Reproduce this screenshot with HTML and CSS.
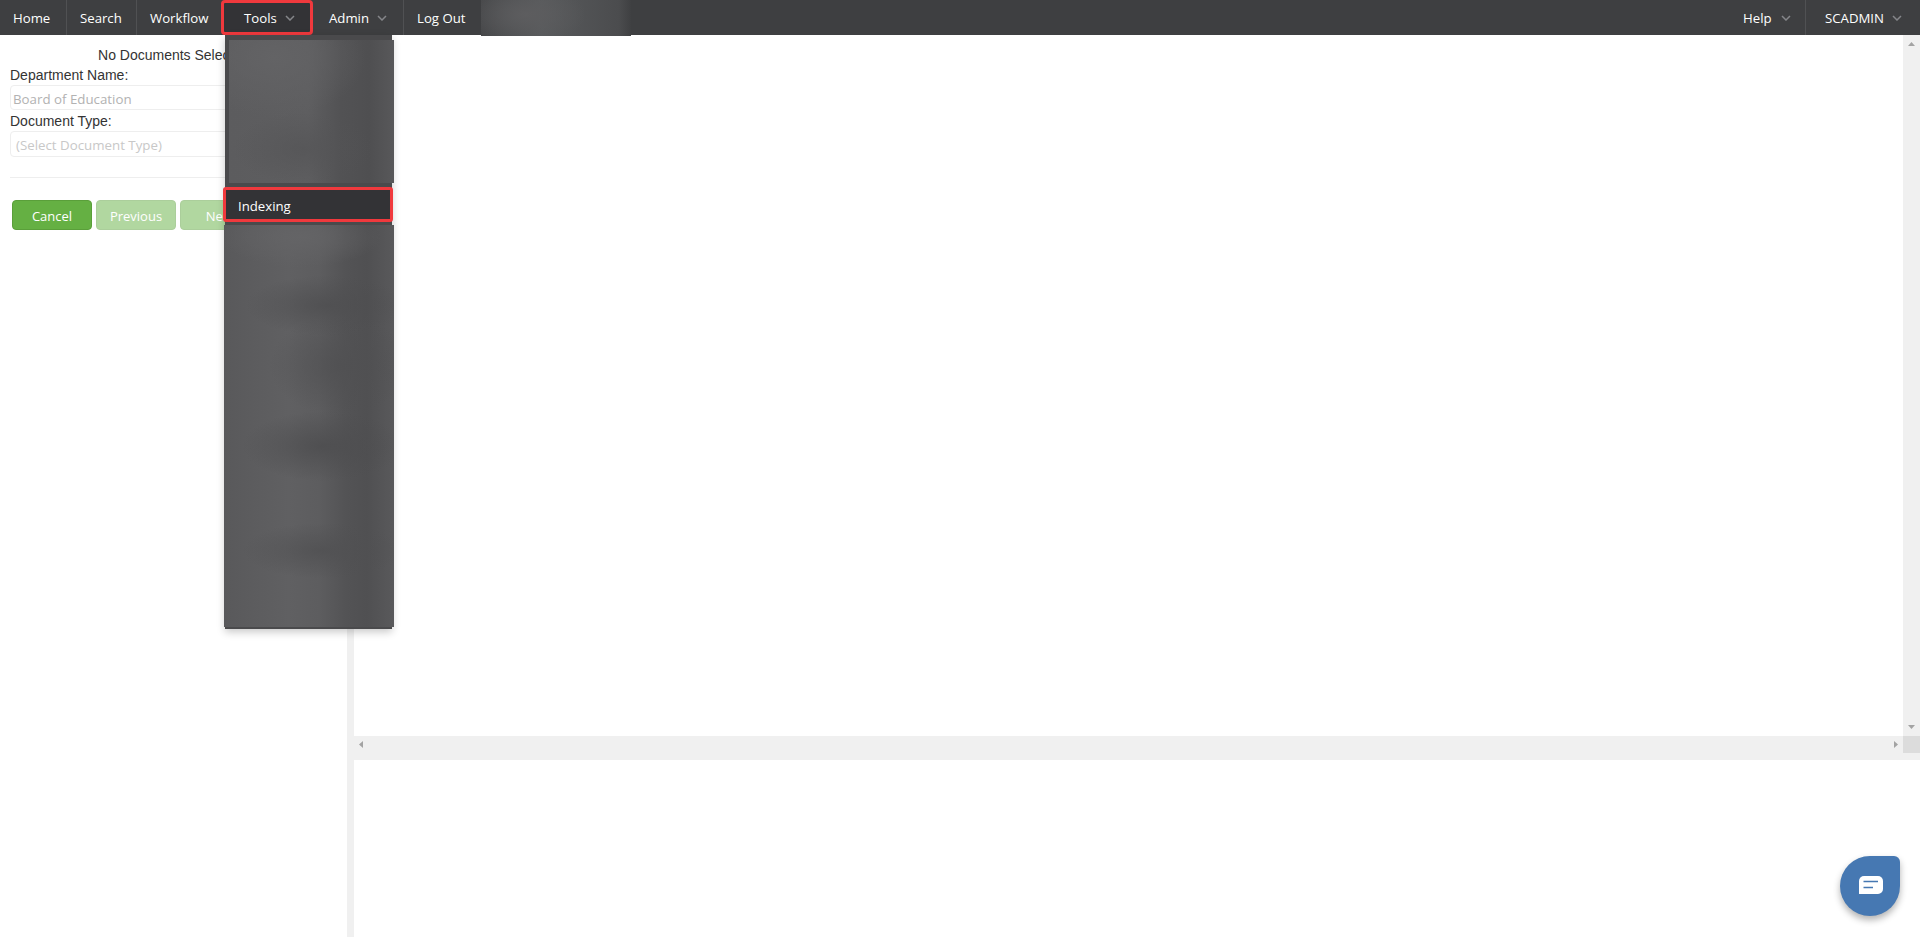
FILE: index.html
```html
<!DOCTYPE html>
<html lang="en">
<head>
<meta charset="utf-8">
<title>Indexing</title>
<link rel="stylesheet" href="styles.css">
</head>
<body>
<nav class="nav">
  <a class="nav-item home">Home</a>
  <a class="nav-item search">Search</a>
  <a class="nav-item workflow">Workflow</a>
  <a class="nav-item tools">Tools<svg class="chev" viewBox="0 0 10 6"><path d="M1 1l4 4 4-4"/></svg></a>
  <a class="nav-item admin">Admin<svg class="chev" viewBox="0 0 10 6"><path d="M1 1l4 4 4-4"/></svg></a>
  <a class="nav-item logout">Log Out</a>
  <div class="nav-blur"></div>
  <a class="nav-item help">Help<svg class="chev" viewBox="0 0 10 6"><path d="M1 1l4 4 4-4"/></svg></a>
  <a class="nav-item user">SCADMIN<svg class="chev" viewBox="0 0 10 6"><path d="M1 1l4 4 4-4"/></svg></a>
</nav>

<div class="menu">
  <div class="blur-top"></div>
  <a class="menu-item">Indexing</a>
  <div class="blur-bottom"></div>
</div>

<main class="main">
  <section class="left">
    <div class="status">No Documents Selected</div>
    <label class="label">Department Name:</label>
    <div class="field dept">Board of Education</div>
    <label class="label">Document Type:</label>
    <div class="field type">(Select Document Type)</div>
    <hr class="rule">
    <div class="buttons">
      <button class="btn">Cancel</button>
      <button class="btn off">Previous</button>
      <button class="btn off">Next</button>
    </div>
  </section>
  <div class="splitter"></div>
  <section class="right">
    <div class="viewer">
      <div class="viewer-body"></div>
      <div class="vbar">
        <svg class="arrow" viewBox="0 0 7 4"><path d="M3.5 0L7 4H0z"/></svg>
        <svg class="arrow" viewBox="0 0 7 4"><path d="M0 0h7L3.5 4z"/></svg>
      </div>
    </div>
    <div class="hbar">
      <div class="hbar-track">
        <svg class="arrow-h" viewBox="0 0 4 7"><path d="M4 0v7L0 3.5z"/></svg>
        <svg class="arrow-h" viewBox="0 0 4 7"><path d="M0 0l4 3.5L0 7z"/></svg>
      </div>
      <div class="corner"></div>
    </div>
    <div class="lower"></div>
  </section>
</main>

<button class="chat" aria-label="Chat">
  <svg viewBox="0 0 24 18" class="chat-icon"><path class="bubble" d="M0 17.500V5a5 5 0 0 1 5-5h14a5 5 0 0 1 5 5v8a5 5 0 0 1-5 5H.5a.5.500 0 0 1-.5-.5z"/><path class="chat-line" d="M4.500 5.500h14.500M4.500 11.500h9.500"/></svg>
</button>
</body>
</html>
```
FILE: styles.css
```css
* { box-sizing: border-box; }
html, body { height: 100%; }
body {
  margin: 0;
  display: flex;
  flex-direction: column;
  height: 937px;
  overflow: hidden;
  background: #fff;
  font-family: "Liberation Sans", Arial, sans-serif;
  font-size: 14px;
  color: #333;
}

/* Top navigation */
.nav {
  flex: 0 0 35px;
  height: 35px;
  min-height: 0;
  display: flex;
  align-items: flex-start;
  background: #3e3f41;
  font-family: "Open Sans", sans-serif;
  font-size: 13.2px;
  color: #fff;
}
.nav-item {
  display: flex;
  align-items: center;
  height: 35px;
  border-right: 1px solid #505153;
  white-space: nowrap;
}
.home { width: 67px; padding-left: 13px; }
.search { width: 70px; padding-left: 13px; }
.workflow { width: 84px; padding-left: 13px; border-right: 0; }
.tools {
  width: 92px;
  padding-left: 20px;
  background: #333336;
  border: 3px solid #f0393d;
  border-radius: 4px;
}
.admin { width: 91px; padding-left: 16px; }
.logout { width: 77px; padding-left: 13px; border-right: 0; }
.nav-blur {
  width: 150px;
  height: 36px;
  background:
    radial-gradient(60px 30px at 30% 40%, #5d5d5f, transparent),
    linear-gradient(90deg, #464749, #585a5c 40%, #4b4c4e 92%, #3f4042);
}
.help { margin-left: auto; width: 177px; padding-left: 114px; flex: 0 0 auto; }
.user { width: 114px; padding-left: 19px; border-right: 0; }
.chev {
  flex: 0 0 10px;
  width: 10px;
  height: 6px;
  margin-left: 8px;
  fill: none;
  stroke: #85868a;
  stroke-width: 1.5;
}
.help .chev { margin-left: 9px; }

/* Dropdown over the page */
.menu {
  position: absolute;
  z-index: 5;
  left: 225px;
  top: 35px;
  width: 167px;
  height: 594px;
  padding-top: 5px;
  background: #4a4a4c;
  box-shadow: 0 3px 8px rgba(0, 0, 0, .22);
}
.blur-top {
  width: 165px;
  height: 143px;
  margin-left: 4px;
  background:
    radial-gradient(70px 36px at 45% 76%, rgba(84, 84, 86, .7), transparent),
    radial-gradient(90px 60px at 28% 12%, #636365, transparent),
    linear-gradient(90deg, #5c5c5e, #5e5e60 48%, #525254 68%, #4f4f51 85%, #58585a);
}
.menu-item {
  display: flex;
  align-items: center;
  width: 170px;
  height: 35px;
  margin: 4px 0 3px -2px;
  padding: 2px 0 0 12px;
  background: #333336;
  border: 3px solid #f0393d;
  border-radius: 3px;
  font-family: "Open Sans", sans-serif;
  font-size: 13.2px;
  color: #fff;
}
.blur-bottom {
  width: 170px;
  height: 402px;
  margin-left: -1px;
  background:
    radial-gradient(80px 30px at 60% 20%, rgba(78, 78, 80, .8), transparent),
    radial-gradient(80px 35px at 58% 55%, rgba(77, 77, 79, .85), transparent),
    radial-gradient(80px 28px at 58% 81%, rgba(80, 80, 82, .8), transparent),
    radial-gradient(70px 50px at 68% 35%, rgba(80, 80, 82, .8), transparent),
    radial-gradient(80px 30px at 45% 3%, #646466, transparent),
    linear-gradient(90deg, #59595b, #606062 38%, #5d5d5f 56%, #535355 72%, #505052 84%, #59595b);
}

/* Page body */
.main {
  flex: 1;
  display: flex;
  min-height: 0;
}
.left {
  flex: 0 0 347px;
  padding: 10px 7px 0 10px;
}
.status { height: 20px; line-height: 20px; text-align: center; padding-right: 3px; }
.label { display: block; height: 20px; line-height: 20px; }
.field {
  height: 25px;
  margin-bottom: 1px;
  line-height: 27px;
  border: 1px solid #eeeeee;
  border-radius: 4px;
  font-family: "Open Sans", sans-serif;
  font-size: 13.3px;
  color: #b2b2b2;
}
.dept { padding-left: 2px; }
.type { padding-left: 5px; height: 26px; color: #c8c8c8; }
.rule {
  height: 1px;
  margin: 20px 0 22px;
  border: 0;
  background: #eeeeee;
}
.buttons { display: flex; gap: 4px; padding-left: 2px; }
.btn {
  width: 80px;
  height: 30px;
  padding: 2px 0 0;
  border: 1px solid #5a9f3a;
  border-radius: 4px;
  background: #65b043;
  font-family: "Open Sans", sans-serif;
  font-size: 13px;
  color: #fff;
}
.btn.off { opacity: .5; }
.splitter { flex: 0 0 7px; background: #f0f0f0; }
.right { flex: 1; display: flex; flex-direction: column; min-width: 0; }
.viewer { flex: 0 0 701px; display: flex; }
.viewer-body { flex: 1; }
.vbar {
  flex: 0 0 17px;
  display: flex;
  flex-direction: column;
  justify-content: space-between;
  align-items: center;
  padding: 7px 0;
  background: #f0f0f0;
}
.arrow { width: 7px; height: 4px; fill: #a3a3a3; }
.hbar { flex: 0 0 24px; display: flex; align-items: flex-start; background: #f0f0f0; }
.hbar-track {
  flex: 1;
  height: 17px;
  display: flex;
  justify-content: space-between;
  align-items: center;
  padding: 0 5px;
}
.arrow-h { width: 4px; height: 7px; fill: #a3a3a3; }
.corner { flex: 0 0 17px; height: 17px; background: #dcdcdc; }
.lower { flex: 1; }

/* Chat launcher */
.chat {
  position: absolute;
  z-index: 6;
  left: 1840px;
  top: 856px;
  width: 60px;
  height: 60px;
  padding: 0 0 2px 1px;
  display: flex;
  align-items: center;
  justify-content: center;
  border: 0;
  border-radius: 50% 6px 50% 50%;
  background: #4678b2;
  box-shadow: 0 4px 7px rgba(0, 0, 0, .3);
}
.chat-icon { width: 24px; height: 18px; }
.bubble { fill: #fff; }
.chat-line { fill: none; stroke: #4678b2; stroke-width: 1.5; }
```
